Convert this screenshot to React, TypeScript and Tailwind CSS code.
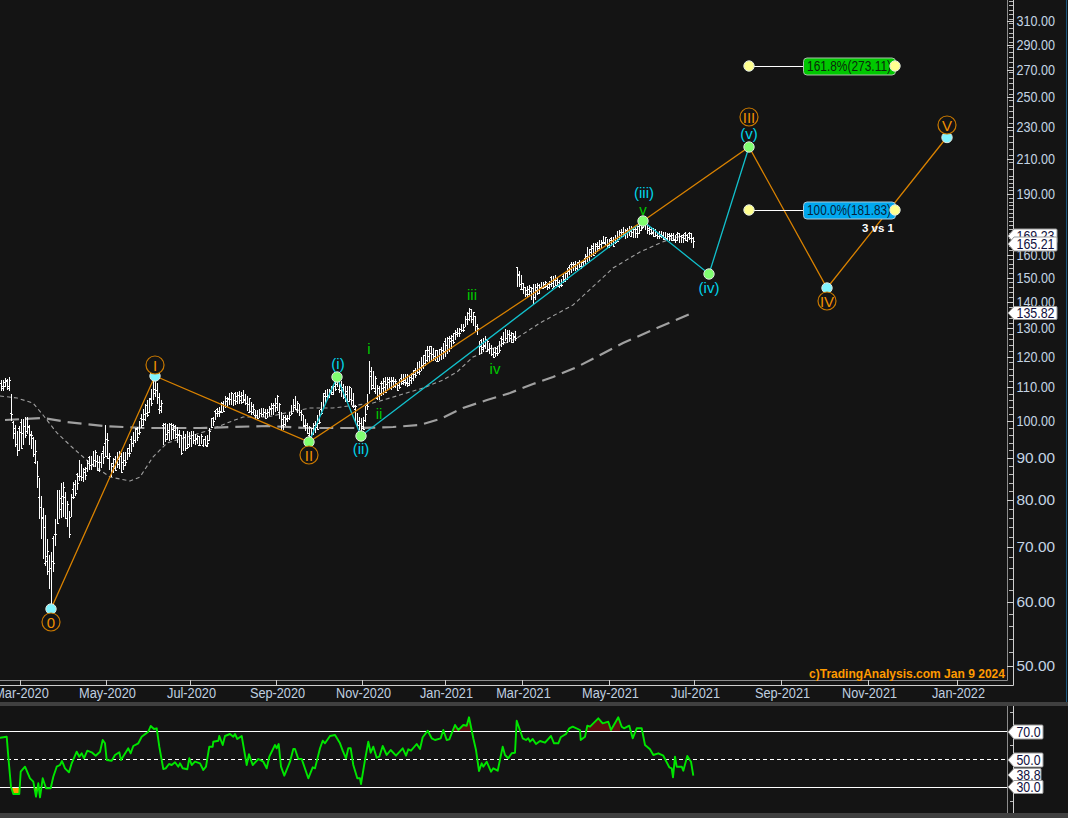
import React from "react";

type WP = [number, number, number];
const wp: WP[] = [
  [0,381,392],[5,380,388],[9,378,392],[10,378,415],[13,423,440],[17,430,457],[22,417,447],[27,417,437],[32,435,455],[36,443,467],
  [38,472,507],[42,497,557],[45,517,567],[48,547,585],[51,553,607],[54,530,557],[57,492,527],[62,480,517],[66,492,523],[69,507,540],
  [72,483,503],[76,477,493],[79,460,483],[84,473,485],[88,457,470],[94,450,467],[100,457,473],[103,445,465],[105,422,457],[107,430,460],[110,463,477],
  [117,450,467],[123,453,472],[127,450,460],[132,433,452],[137,427,440],[142,410,427],[148,400,417],[152,388,403],[155,375,397],[159,390,413],[161,400,414],
  [163,422,445],[168,423,440],[175,425,440],[182,433,455],[190,430,447],[198,435,443],[205,438,447],[208,432,447],[211,418,427],[218,408,417],
  [225,397,407],[232,393,405],[243,390,403],[250,402,415],[256,410,418],[265,410,418],[272,403,415],[277,395,410],[282,415,432],[287,417,423],
  [295,395,408],[300,408,418],[305,418,430],[311,430,440],[318,413,427],[323,392,407],[330,388,397],[337,378,387],[340,382,398],[346,385,400],
  [352,388,405],[356,408,425],[358,417,430],[362,420,433],[366,403,420],[368,385,405],[369,362,393],[373,370,390],[378,390,403],[383,377,393],[390,377,390],
  [397,382,388],[403,373,385],[408,375,387],[413,370,380],[420,360,373],[428,345,363],[433,348,360],[440,350,360],[445,337,357],[450,335,350],
  [455,330,340],[462,325,332],[468,310,323],[472,308,322],[476,320,335],[478,328,337],[479,340,355],[485,338,350],[492,348,357],[497,347,357],[501,337,348],
  [505,328,340],[512,333,343],[515,333,342],[516,333,342],[517,266,287],[520,273,288],[525,287,297],[530,288,297],[533,283,302],[540,283,290],
  [548,283,288],[552,275,287],[560,280,287],[567,268,278],[572,260,270],[582,262,267],[587,248,263],[595,243,253],[603,238,245],[612,238,247],
  [620,228,238],[630,228,237],[636,225,237],[643,220,227],[650,228,235],[660,232,238],[670,233,240],[680,235,243],[688,233,240],[693,237,247],
];

function rng(seed: number) {
  let s = seed;
  return () => {
    s = (s * 1664525 + 1013904223) >>> 0;
    return s / 4294967296;
  };
}

function barsPath() {
  const r = rng(17);
  let d = "";
  for (let x = 1; x <= 693; x += 2) {
    let i = 0;
    while (i < wp.length - 2 && wp[i + 1][0] < x) i++;
    const a = wp[i], b = wp[i + 1];
    const t = Math.min(1, Math.max(0, (x - a[0]) / (b[0] - a[0] || 1)));
    const hi0 = a[1] + (b[1] - a[1]) * t;
    const lo0 = a[2] + (b[2] - a[2]) * t;
    const h = lo0 - hi0;
    const j = h * 0.14;
    const shift = (r() - 0.5) * 3;
    const hi = Math.round(hi0 - 1 + r() * j + shift);
    const lo = Math.round(lo0 + 1 - r() * j + shift);
    const o = Math.round(hi + r() * (lo - hi));
    const c = Math.round(hi + r() * (lo - hi));
    d += `M${x + 0.5} ${hi}V${lo}M${x} ${c + 0.5}H${x + 2}`;
    if (r() < 0.7) d += `M${x - 1} ${o + 0.5}H${x}`;
  }
  return d;
}

const line = (pts: number[][]) => pts.map((p, i) => `${i ? "L" : "M"}${p[0]} ${p[1]}`).join("");

const shortMA = [[0,396],[17,398],[33,403],[43,415],[57,433],[73,448],[90,463],[110,477],[130,481],[140,477],[153,457],[167,443],[187,437],[210,430],[227,423],[243,417],[267,417],[290,412],[310,408],[333,408],[373,403],[390,398],[423,388],[443,380],[457,372],[473,357],[517,338],[540,323],[573,305],[597,283],[613,268],[640,252],[660,243],[673,238],[687,235]];
const longMA = [[5,420],[43,418],[67,422],[103,426],[143,428],[200,428],[233,427],[267,426],[307,428],[360,428],[393,427],[420,425],[440,419],[463,408],[487,400],[510,393],[533,384],[553,377],[577,367],[623,343],[657,328],[692,313]];

const rsiA = [[0,233],[20,230],[25,290],[33,380],[40,402],[58,402],[62,335],[75,320],[90,355],[100,365],[108,410],[115,370],[120,412],[128,355],[138,385],[152,385],[160,350],[170,320],[180,315],[186,303],[195,325],[207,337],[215,310],[230,275],[238,290],[245,280],[252,295],[262,272],[275,277],[287,287],[300,275],[308,240],[315,250],[320,300],[335,302],[345,285],[358,277],[363,300],[385,265],[392,280],[400,258],[415,250],[425,230],[445,215],[452,198],[462,207],[470,205],[478,260],[490,327],[497,325],[507,312],[515,315],[525,307],[535,320],[540,310],[548,325],[562,328],[568,295],[575,315],[585,305],[600,310],[610,330],[618,320],[628,260],[638,260],[640,245],[655,242],[658,228],[668,255],[675,228],[690,222],[700,230],[705,222],[712,237],[725,228],[740,315],[747,283],[758,315],[775,297],[790,305],[800,325],[808,290],[825,255],[830,265],[836,252],[843,320],[853,347],[870,305],[880,267],[885,267],[895,297],[905,297],[925,355],[938,322],[945,325],[960,265],[968,242],[975,250],[990,228],[1005,225],[1020,250],[1028,272],[1038,295],[1045,265],[1052,265],[1060,315],[1072,355]];
const rsiB = [[30,355],[33,372],[45,300],[55,245],[62,278],[70,260],[80,293],[88,290],[98,258],[110,285],[122,270],[138,287],[158,265],[168,287],[175,268],[183,272],[200,252],[210,267],[218,232],[233,212],[245,235],[255,240],[272,235],[280,210],[290,240],[298,238],[315,195],[325,210],[340,195],[350,197],[357,172],[370,235],[378,270],[387,333],[395,310],[400,320],[410,305],[423,335],[430,325],[443,332],[458,260],[465,285],[475,295],[485,280],[495,278],[500,182],[518,235],[528,240],[535,235],[540,245],[548,237],[558,252],[570,243],[585,248],[603,228],[612,250],[625,250],[632,232],[648,222],[658,205],[668,200],[690,210],[692,240],[705,230],[712,197],[720,200],[745,175],[758,190],[775,185],[783,210],[805,172],[815,200],[822,205],[838,197],[848,235],[860,205],[875,205],[885,255],[900,268],[910,285],[925,280],[940,287],[958,322],[965,325],[969,352],[975,290],[980,320],[995,320],[1000,332],[1012,288],[1023,305],[1030,347]];
const rsi = [
  ...rsiA.map(([x, y]) => [+(x / 3).toFixed(1), +(660 + y / 3 - 706).toFixed(1)]),
  ...rsiB.map(([x, y]) => [+(350 + x / 3).toFixed(1), +(660 + y / 3 - 706).toFixed(1)]),
];
const rsiD = line(rsi);
const rsiEnd = rsi[rsi.length - 1][0];

const priceY = (p: number) => 666 - 353.5 * Math.log(p / 50);
const labels = [310,290,270,250,230,210,190,160,150,140,130,120,110,100,90,80,70,60,50];
const minor: number[] = [];
for (let p = 52; p < 200; p += 2) minor.push(p);
for (let p = 200; p <= 330; p += 4) minor.push(p);

const months: [string, number, number][] = [
  ["Mar-2020",20.5,54.5],["May-2020",106.5,57],["Jul-2020",190.5,49],["Sep-2020",276.5,55.2],["Nov-2020",362.5,55],["Jan-2021",445.5,53],
  ["Mar-2021",522.5,54.5],["May-2021",609.5,57],["Jul-2021",694.5,49],["Sep-2021",781.5,55.2],["Nov-2021",868.5,55],["Jan-2022",957.5,53],
];

const CY = "#80f4ff", GR = "#80ff70", YE = "#ffff90";
const dots: [number, number, string][] = [
  [51,609,CY],[155,376,CY],[309,442,GR],[337,377,GR],[361,436,GR],[643,221,GR],[709,274,GR],[749,147,GR],[827,288,CY],[947,137.5,CY],
  [749,66,YE],[895,66,YE],[749,210,YE],[895,210,YE],
];
const circled: [string, number, number][] = [["0",51,622],["I",155,365],["II",309,455],["III",749,117],["IV",827,301],["V",947,125]];
const cyanL: [string, number, number][] = [["(i)",338,364],["(ii)",361,449],["(iii)",644,193],["(iv)",709,288],["(v)",749,134]];
const greenL: [string, number, number][] = [["i",369,349],["ii",379,414],["iii",472,295],["iv",495,369],["v",643,210]];

function Flag({ y, h, x2, text, textX, tl }: { y: number; h: number; x2: number; text: string; textX: number; tl: number }) {
  const top = y - h / 2, bot = y + h / 2;
  return (
    <g>
      <path d={`M1008 ${y}L1014 ${top}H${x2 - 1}Q${x2} ${top} ${x2} ${top + 1}V${bot - 1}Q${x2} ${bot} ${x2 - 1} ${bot}H1014Z`} fill="#ffffff" stroke="#9a9a9a" strokeWidth="1" />
      <text x={textX} y={y + 5} fontSize="14" fill="#101040" textLength={tl} lengthAdjust="spacingAndGlyphs">{text}</text>
    </g>
  );
}

export default function App() {
  return (
    <div className="w-[1068px] h-[818px] overflow-hidden flex flex-col bg-[#141414] font-['Liberation_Sans',Arial,sans-serif]">
      <svg width="1068" height="702" viewBox="0 0 1068 702" className="block shrink-0">
        <path d={line(longMA)} fill="none" stroke="#a0a0a0" strokeWidth="2.2" strokeDasharray="14 7" />
        <path d={line(shortMA)} fill="none" stroke="#a0a0a0" strokeWidth="1.1" strokeDasharray="4 3" />
        <path d={barsPath()} fill="none" stroke="#ffffff" strokeWidth="1" shapeRendering="crispEdges" />

        <path d={line([[309,442],[337,377],[361,436],[643,221],[709,274],[749,147]])} fill="none" stroke="#12c0cc" strokeWidth="1.3" />
        <path d={line([[51,609],[155,376],[309,442],[643,221],[749,147],[827,288],[947,137]])} fill="none" stroke="#d98200" strokeWidth="1.3" />

        <path d="M749 66.5H803M749 210.5H803" stroke="#ffffff" strokeWidth="1" />
        <rect x="803.5" y="58" width="92" height="17" rx="3.5" fill="#00c800" stroke="#a8c0a8" />
        <rect x="803.5" y="202" width="92" height="17" rx="3.5" fill="#00a8f0" stroke="#a8c8d8" />
        <text x="807" y="71" fontSize="14" fill="#0b2a0b" textLength="84" lengthAdjust="spacingAndGlyphs">161.8%(273.11)</text>
        <text x="807" y="215" fontSize="14" fill="#06243c" textLength="84" lengthAdjust="spacingAndGlyphs">100.0%(181.83)</text>
        <text x="862" y="232" fontSize="11.5" fontWeight="700" fill="#ffffff">3 vs 1</text>

        {dots.map(([x, y, c]) => (
          <circle key={`${x}-${y}`} cx={x} cy={y} r="5.2" fill={c} stroke="#dfe8df" strokeWidth="1" />
        ))}
        {circled.map(([t, x, y]) => (
          <g key={t}>
            <circle cx={x} cy={y} r="9" fill="#141414" stroke="#c87800" strokeWidth="1.2" />
            <text x={x} y={y + 5.5} fontSize="15" textAnchor="middle" fill="#f09000">{t}</text>
          </g>
        ))}
        {cyanL.map(([t, x, y]) => (
          <text key={t} x={x} y={y + 5} fontSize="15" textAnchor="middle" fill="#00d4ec">{t}</text>
        ))}
        {greenL.map(([t, x, y]) => (
          <text key={t} x={x} y={y + 5} fontSize="15" textAnchor="middle" fill="#00c800">{t}</text>
        ))}

        <path d="M1007.5 0V680.5H0" fill="none" stroke="#8c8c8c" />
        <path d="M1013.5 0V685.5H0" fill="none" stroke="#cfcfcf" />
        <path d="M1066.5 0V702" stroke="#1d5a82" />
        {minor.map((p) => (
          <path key={p} d={`M1009 ${Math.round(priceY(p)) + 0.5}H1013`} stroke="#bdbdbd" />
        ))}
        {labels.map((p) => (
          <g key={p}>
            <path d={`M1007 ${Math.round(priceY(p)) + 0.5}H1013`} stroke="#cfcfcf" />
            <text x="1016.5" y={Math.round(priceY(p)) + 5} fontSize="14" fill="#c4d4e4" textLength="38.5" lengthAdjust="spacingAndGlyphs">{p.toFixed(2)}</text>
          </g>
        ))}
        {months.map(([m, x, w]) => (
          <g key={m}>
            <path d={`M${x} 680V685`} stroke="#cfcfcf" />
            <text x={x + 1 - w / 2} y="698" fontSize="14" fill="#c0d0e0" textLength={w} lengthAdjust="spacingAndGlyphs">{m}</text>
          </g>
        ))}
        <text x="809" y="678" fontSize="13" fontWeight="700" fill="#ff9a00" textLength="196" lengthAdjust="spacingAndGlyphs">c)TradingAnalysis.com Jan 9 2024</text>

        <Flag y={236} h={14} x2={1057} text="169.23" textX={1016.5} tl={38} />
        <Flag y={244} h={14} x2={1057} text="165.21" textX={1016.5} tl={38} />
        <Flag y={313} h={13} x2={1057} text="135.82" textX={1016.5} tl={38} />
      </svg>

      <div className="h-1 shrink-0 bg-[#404040]" />

      <svg width="1068" height="107" viewBox="0 0 1068 107" className="block shrink-0">
        <defs>
          <clipPath id="overA"><rect x="450" y="0" width="21" height="25" /></clipPath>
          <clipPath id="overB"><rect x="586" y="0" width="34" height="25" /></clipPath>
          <clipPath id="under"><rect x="0" y="81.5" width="40" height="20" /></clipPath>
        </defs>
        <path d={`${rsiD}L${rsiEnd} 25L0 25Z`} fill="#5c1010" clipPath="url(#overA)" />
        <path d={`${rsiD}L${rsiEnd} 25L0 25Z`} fill="#5c1010" clipPath="url(#overB)" />
        <path d={`${rsiD}L${rsiEnd} 81.5L0 81.5Z`} fill="#ff9a00" clipPath="url(#under)" />
        <path d="M0 25.5H1007M0 81.5H1007" stroke="#ffffff" />
        <path d="M0 53.5H1007" stroke="#ffffff" strokeDasharray="4 3" />
        <path d={rsiD} fill="none" stroke="#00e600" strokeWidth="1.9" strokeLinejoin="round" />

        <path d="M1007.5 0V107" stroke="#8c8c8c" />
        <path d="M1013.5 0V107" stroke="#cfcfcf" />
        {[6.5, 39.5, 67.5, 95.5].map((y) => (
          <path key={y} d={`M1010 ${y}H1013`} stroke="#bdbdbd" />
        ))}

        <Flag y={26} h={14} x2={1043} text="70.0" textX={1016.5} tl={24} />
        <Flag y={54} h={14} x2={1043} text="50.0" textX={1016.5} tl={24} />
        <Flag y={69} h={13} x2={1041} text="38.8" textX={1016.5} tl={24} />
        <Flag y={81} h={13} x2={1043} text="30.0" textX={1016.5} tl={24} />
      </svg>

      <div className="flex-1 bg-[#404040]" />
    </div>
  );
}
